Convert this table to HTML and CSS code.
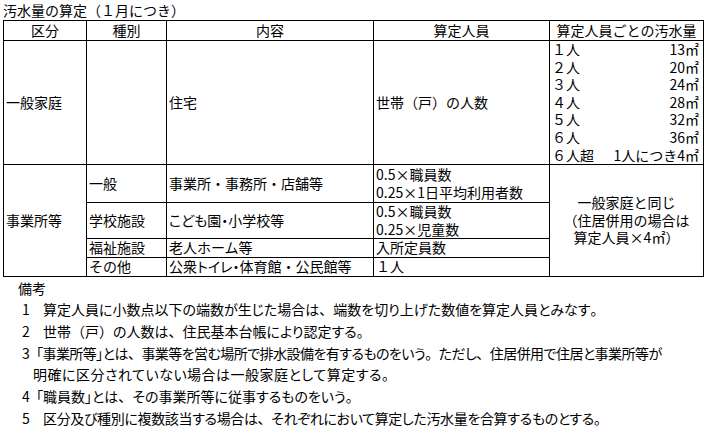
FILE: index.html
```html
<!DOCTYPE html>
<html lang="ja">
<head>
<meta charset="utf-8">
<title>汚水量の算定</title>
<link rel="stylesheet" href="styles.css">
</head>
<body>
<div class="page">
  <p class="title">汚水量の算定（１月につき）</p>
  <table class="tbl">
    <colgroup>
      <col class="c1"><col class="c2"><col class="c3"><col class="c4"><col class="c5">
    </colgroup>
    <thead>
      <tr class="row-head">
        <th>区分</th><th>種別</th><th>内容</th><th>算定人員</th><th>算定人員ごとの汚水量</th>
      </tr>
    </thead>
    <tbody>
      <tr class="row-home">
        <td>一般家庭</td>
        <td></td>
        <td>住宅</td>
        <td>世帯（戸）の人数</td>
        <td class="rates">
          <div class="rate"><span>１人</span><span>13㎡</span></div>
          <div class="rate"><span>２人</span><span>20㎡</span></div>
          <div class="rate"><span>３人</span><span>24㎡</span></div>
          <div class="rate"><span>４人</span><span>28㎡</span></div>
          <div class="rate"><span>５人</span><span>32㎡</span></div>
          <div class="rate"><span>６人</span><span>36㎡</span></div>
          <div class="rate"><span>６人超</span><span>1人につき4㎡</span></div>
        </td>
      </tr>
      <tr class="row-two">
        <td rowspan="4">事業所等</td>
        <td>一般</td>
        <td>事業所・事務所・店舗等</td>
        <td>0.5×職員数<br>0.25×1日平均利用者数</td>
        <td rowspan="4" class="same">一般家庭と同じ<br>（住居併用の場合は<br>算定人員×4㎡）</td>
      </tr>
      <tr class="row-two2">
        <td>学校施設</td>
        <td><span class="pk">こども園・</span>小学校等</td>
        <td>0.5×職員数<br>0.25×児童数</td>
      </tr>
      <tr class="row-one">
        <td>福祉施設</td>
        <td>老人ホーム等</td>
        <td>入所定員数</td>
      </tr>
      <tr class="row-one2">
        <td>その他</td>
        <td>公衆<span class="pk">トイレ・</span>体育館・公民館等</td>
        <td>１人</td>
      </tr>
    </tbody>
  </table>
  <div class="notes">
    <p class="notes-title">備考</p>
    <p class="note"><span class="num">1</span><span class="txt">算定人員に小数点以下の端数が生じた場合は<span class="fw">、</span>端数を切り上げた数値を算定人員とみなす<span class="fw">。</span></span></p>
    <p class="note"><span class="num">2</span><span class="txt">世帯<span class="fw">（</span>戸<span class="fw">）</span>の人数は<span class="fw">、</span>住民基本台帳により認定する<span class="fw">。</span></span></p>
    <p class="note n3"><span class="num">3</span><span class="txt"><span class="hang">「</span>事業所等」とは<span class="fw">、</span>事業等を営む場所で排水設備を有するものをいう<span class="fw">。</span>ただし<span class="fw">、</span>住居併用で住居と事業所等が</span></p>
    <p class="note cont">明確に区分されていない場合は一般家庭として算定する<span class="fw">。</span></p>
    <p class="note"><span class="num">4</span><span class="txt"><span class="hang">「</span>職員数」とは<span class="fw">、</span>その事業所等に従事するものをいう<span class="fw">。</span></span></p>
    <p class="note n5"><span class="num">5</span><span class="txt">区分及び種別に複数該当する場合は<span class="fw">、</span>それぞれにおいて算定した汚水量を合算するものとする<span class="fw">。</span></span></p>
  </div>
</div>
</body>
</html>
```

FILE: styles.css
```css
html, body {
  margin: 0;
  padding: 0;
  background: #ffffff;
}

body {
  font-family: "Noto Sans CJK JP", "Noto Sans", sans-serif;
  font-size: 14px;
  color: #000000;
}

.page {
  width: 710px;
  height: 428px;
  padding-left: 3px;
  box-sizing: border-box;
  overflow: hidden;
}

.title {
  margin: 0;
  height: 20px;
  line-height: 21px;
  white-space: nowrap;
}

.tbl {
  border-collapse: collapse;
  table-layout: fixed;
  width: 700px;
  line-height: 17.5px;
}

.c1 { width: 83px; }
.c2 { width: 80px; }
.c3 { width: 207px; }
.c4 { width: 176px; }
.c5 { width: 154px; }

.tbl th,
.tbl td {
  border: 1px solid #000000;
  padding: 0 2px;
  vertical-align: middle;
  text-align: left;
  white-space: nowrap;
  font-weight: normal;
}

.tbl th {
  text-align: center;
  height: 19px;
  padding: 0;
}

.row-home td { height: 123px; }
.row-two td { height: 37px; }
.row-two2 td { height: 34px; }
.row-one td { height: 18px; }
.row-one2 td { height: 17px; }

.pk {
  font-feature-settings: "palt";
}

.tbl td.rates {
  padding: 0 4px 0 2px;
}

.rate {
  display: flex;
  justify-content: space-between;
  height: 17.6px;
}

.tbl td.same {
  text-align: center;
}

.notes {
  padding-top: 1px;
  line-height: 21.7px;
  font-feature-settings: "palt";
}

.notes p {
  margin: 0;
  white-space: nowrap;
}

.notes .fw {
  font-feature-settings: normal;
}

.notes-title {
  padding-left: 15px;
}

.note {
  display: flex;
}

.note.n3 {
  letter-spacing: -0.55px;
}

.note.n5 {
  letter-spacing: -0.35px;
}

.num {
  width: 40px;
  padding-left: 19px;
  box-sizing: border-box;
  flex: none;
  letter-spacing: 0;
}

.hang {
  margin-left: -7px;
}

.note.cont {
  padding-left: 30px;
  letter-spacing: 0.5px;
}
```
